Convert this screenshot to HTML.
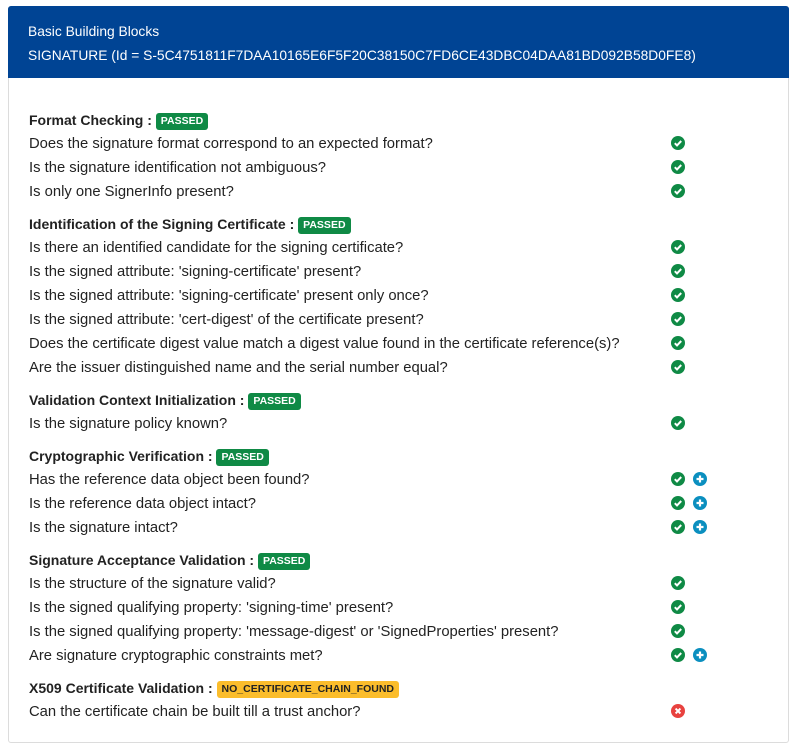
<!DOCTYPE html>
<html><head><style>
body{margin:0;background:#fff;font-family:"Liberation Sans",sans-serif;}
.card{position:absolute;left:8px;top:6px;width:781px;height:737px;border:1px solid #dcdcdc;border-radius:3px;background:#fff;box-sizing:border-box;}
.hd{background:#004494;color:#fff;height:72px;box-sizing:border-box;padding:14px 0 0 20px;font-size:13.8px;line-height:24px;margin:-1px -1px 0 -1px;border-radius:3px 3px 0 0}
.bd{padding:30px 0 0 20px}
.h{font-weight:bold;font-size:14px;line-height:24px;height:24px;margin-top:8px;color:#222}
.h:first-child{margin-top:0}
.r{font-size:14.8px;line-height:25px;height:24px;color:#222;position:relative}
.b{display:inline-block;font-size:10.5px;font-weight:bold;color:#fff;background:#0f8a45;border-radius:3px;padding:0 5px;line-height:17px;vertical-align:1px}
.y{background:#fbbd2c;color:#222}
.i{position:absolute;left:642px;top:4px;width:14px;height:14px}
.p{left:664px}
</style></head><body>
<div class="card">
<div class="hd">Basic Building Blocks<br>SIGNATURE (Id = S-5C4751811F7DAA10165E6F5F20C38150C7FD6CE43DBC04DAA81BD092B58D0FE8)</div>
<div class="bd" id="b"></div>
</div>
<svg width="0" height="0" style="position:absolute"><defs>
<symbol id="ok" viewBox="0 0 14 14"><circle cx="7" cy="7" r="7" fill="#0f8a45"/><path d="M3.8 7.2l2.2 2.2 4.2-4.4" stroke="#fff" stroke-width="2" fill="none"/></symbol>
<symbol id="pl" viewBox="0 0 14 14"><circle cx="7" cy="7" r="7" fill="#0b8fbf"/><path d="M7 3.5v7M3.5 7h7" stroke="#fff" stroke-width="2.2"/></symbol>
<symbol id="ko" viewBox="0 0 14 14"><circle cx="7" cy="7" r="7" fill="#e8423f"/><path d="M4.6 4.6l4.8 4.8M9.4 4.6l-4.8 4.8" stroke="#fff" stroke-width="2"/></symbol>
</defs></svg>
<script>
var d=[["Format Checking",0,[["Does the signature format correspond to an expected format?"],["Is the signature identification not ambiguous?"],["Is only one SignerInfo present?"]]],
["Identification of the Signing Certificate",0,[["Is there an identified candidate for the signing certificate?"],["Is the signed attribute: 'signing-certificate' present?"],["Is the signed attribute: 'signing-certificate' present only once?"],["Is the signed attribute: 'cert-digest' of the certificate present?"],["Does the certificate digest value match a digest value found in the certificate reference(s)?"],["Are the issuer distinguished name and the serial number equal?"]]],
["Validation Context Initialization",0,[["Is the signature policy known?"]]],
["Cryptographic Verification",0,[["Has the reference data object been found?",1],["Is the reference data object intact?",1],["Is the signature intact?",1]]],
["Signature Acceptance Validation",0,[["Is the structure of the signature valid?"],["Is the signed qualifying property: 'signing-time' present?"],["Is the signed qualifying property: 'message-digest' or 'SignedProperties' present?"],["Are signature cryptographic constraints met?",1]]],
["X509 Certificate Validation",1,[["Can the certificate chain be built till a trust anchor?",2]]]];
var h="";d.forEach(function(s){h+='<div class="h">'+s[0]+' : '+(s[1]?'<span class="b y">NO_CERTIFICATE_CHAIN_FOUND</span>':'<span class="b">PASSED</span>')+'</div>';
s[2].forEach(function(r){h+='<div class="r">'+r[0]+(r[1]==2?'<svg class="i"><use href="#ko"/></svg>':'<svg class="i"><use href="#ok"/></svg>')+(r[1]==1?'<svg class="i p"><use href="#pl"/></svg>':'')+'</div>';});});
document.getElementById("b").innerHTML=h;
</script>
</body></html>
